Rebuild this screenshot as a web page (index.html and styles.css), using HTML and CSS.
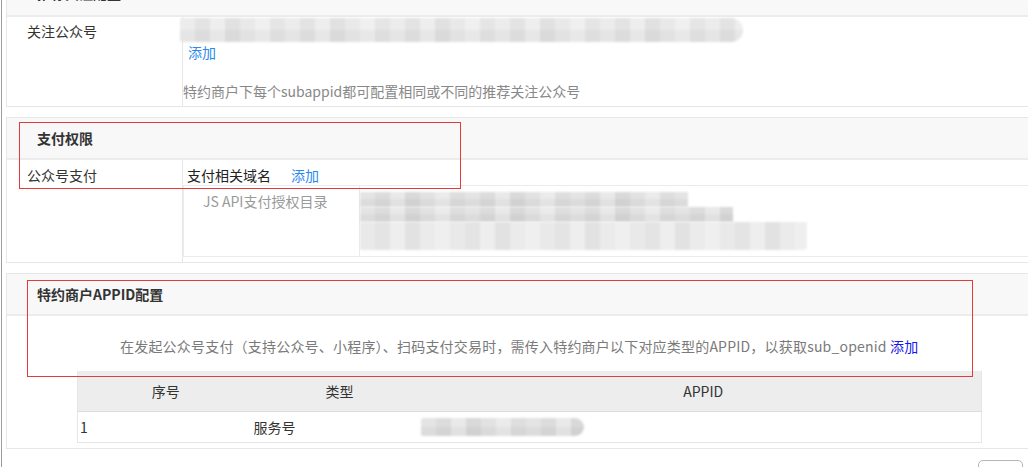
FILE: index.html
```html
<!DOCTYPE html>
<html lang="zh-CN">
<head>
<meta charset="utf-8">
<title>特约商户配置</title>
<link rel="stylesheet" href="styles.css">
</head>
<body>
<div class="page">
  <section class="panel panel-first">
    <div class="panel-head">推荐关注配置</div>
    <div class="panel-row">
      <div class="label label-first">关注公众号</div>
      <div class="value value-first">
        <div class="blur blur-appid"></div>
        <a class="link link-add">添加</a>
        <p class="note">特约商户下每个subappid都可配置相同或不同的推荐关注公众号</p>
      </div>
    </div>
  </section>

  <section class="panel">
    <div class="panel-head">支付权限</div>
    <div class="panel-row">
      <div class="label">公众号支付</div>
      <div class="value value-pay">
        <div class="domain-line">支付相关域名<a class="link link-domain">添加</a></div>
        <div class="dir-box">
          <div class="dir-label">JS API支付授权目录</div>
          <div class="dir-value">
            <div class="blur blur-dir blur-dir-1"></div>
            <div class="blur blur-dir blur-dir-2"></div>
            <div class="blur blur-dir blur-dir-3"></div>
          </div>
        </div>
      </div>
    </div>
  </section>

  <section class="panel">
    <div class="panel-head">特约商户APPID配置</div>
    <div class="panel-body">
      <p class="tip">在发起公众号支付（支持公众号、小程序）、扫码支付交易时，需传入特约商户以下对应类型的APPID，以获取sub_openid <a class="link-strong">添加</a></p>
      <table class="appid-table">
        <colgroup>
          <col class="col-no">
          <col class="col-type">
          <col class="col-appid">
        </colgroup>
        <thead>
          <tr><th>序号</th><th>类型</th><th>APPID</th></tr>
        </thead>
        <tbody>
          <tr>
            <td class="cell-no">1</td>
            <td class="cell-type">服务号</td>
            <td class="cell-appid"><div class="blur blur-row"></div></td>
          </tr>
        </tbody>
      </table>
    </div>
  </section>

  <div class="footer"><button class="btn" type="button">返回</button></div>
</div>

<div class="mark mark-pay"></div>
<div class="mark mark-appid"></div>
</body>
</html>
```

FILE: styles.css
```css
html, body {
  margin: 0;
  padding: 0;
  overflow: hidden;
  background: #ffffff;
}

body {
  font-family: "Noto Sans CJK SC", "Microsoft YaHei", sans-serif;
  font-size: 14px;
  line-height: 20px;
  color: #333333;
  width: 1028px;
  height: 467px;
}

.page {
  display: flow-root;
  margin-left: 1px;
  border-left: 1px solid #9c9c9c;
  padding-left: 4px;
  height: 600px;
  width: 1100px;
}

.panel {
  width: 1045px;
  box-sizing: border-box;
  border: 1px solid #e7e7e7;
  margin-top: 10px;
  background: #ffffff;
}

.panel-first {
  margin-top: -27px;
}

.panel-head {
  height: 40px;
  line-height: 40px;
  padding-left: 30px;
  background: #f8f8f8;
  border-bottom: 2px solid #ececec;
  font-weight: bold;
  color: #333333;
}

.panel-first .panel-head {
  height: 41px;
  line-height: 38px;
}

.panel-row {
  display: flex;
}

.label {
  width: 176px;
  flex: none;
  box-sizing: border-box;
  border-right: 1px solid #e7e7e7;
  padding: 5px 0 0 20px;
  color: #333333;
}

.label-first {
  padding-top: 4px;
}

.value {
  flex: 1;
  min-width: 0;
}

.value-first {
  padding: 1px 0 5px 0;
}

.link {
  color: #2a8af0;
  text-decoration: none;
}

.link-add {
  display: block;
  padding-left: 5px;
}

.note {
  margin: 19px 0 0 0;
  color: #888888;
}

/* blurred (masked) values */
.blur {
  filter: blur(0.8px);
  background:
    linear-gradient(180deg, rgba(255,255,255,0) 0 50%, rgba(0,0,0,0.035) 50% 100%),
    repeating-linear-gradient(90deg,
      #e4e4e4 0 15px, #dcdcdc 15px 30px, #e9e9e9 30px 45px,
      #d9d9d9 45px 60px, #e2e2e2 60px 75px, #ebebeb 75px 90px,
      #dedede 90px 105px);
}

.blur-appid {
  width: 563px;
  height: 24px;
  margin-left: -3px;
  border-radius: 2px 12px 12px 2px;
  background:
    linear-gradient(180deg, rgba(255,255,255,0) 0 50%, rgba(0,0,0,0.03) 50% 100%),
    repeating-linear-gradient(90deg,
      #ececec 0 15px, #e3e3e3 15px 30px, #eeeeee 30px 45px,
      #e1e1e1 45px 60px, #e9e9e9 60px 75px, #f0f0f0 75px 90px,
      #e5e5e5 90px 105px);
}

.domain-line {
  padding: 5px 0 0 4px;
  color: #222222;
}

.link-domain {
  margin-left: 20px;
}

.value-pay {
  padding-bottom: 5px;
}

.dir-box {
  display: flex;
  border: 1px solid #ebebeb;
  border-right: none;
  height: 70px;
}

.dir-label {
  width: 176px;
  flex: none;
  box-sizing: border-box;
  border-right: 1px solid #ebebeb;
  padding: 5px 0 0 19px;
  color: #9a9a9a;
}

.dir-value {
  flex: 1;
  padding-top: 6px;
}

.blur-dir-1 {
  width: 328px;
  height: 15px;
}

.blur-dir-2 {
  width: 373px;
  height: 15px;
}

.blur-dir-3 {
  width: 447px;
  height: 28px;
  border-radius: 0 0 4px 0;
  background:
    repeating-linear-gradient(90deg,
      #e9e9e9 0 15px, #e4e4e4 15px 30px, #eeeeee 30px 45px,
      #e2e2e2 45px 60px, #ebebeb 60px 75px, #efefef 75px 90px);
}

.panel-body {
  padding: 20px 0 5px 0;
}

.tip {
  margin: 0 0 15px 0;
  padding-left: 113px;
  color: #7a7a7a;
  white-space: nowrap;
  letter-spacing: 0.2px;
}

.link-strong {
  color: #1616ee;
  text-decoration: none;
}

.appid-table {
  margin-left: 70px;
  width: 904px;
  table-layout: fixed;
  border-collapse: collapse;
  border: 1px solid #e6e6e6;
  border-top: none;
}

.col-no { width: 176px; }
.col-type { width: 172px; }
.col-appid { width: 556px; }

.appid-table th {
  height: 40px;
  padding: 0;
  background: #ededed;
  border-bottom: 1px solid #dcdcdc;
  font-weight: normal;
  text-align: center;
  color: #333333;
}

.appid-table td {
  height: 30px;
  padding: 0;
  text-align: left;
  vertical-align: middle;
  color: #333333;
}

.cell-no {
  padding-left: 2px !important;
  color: #3a2a5a;
}

.cell-appid {
  overflow: visible;
}

.blur-row {
  width: 163px;
  height: 18px;
  margin-left: -5px;
  border-radius: 2px 9px 9px 2px;
}

.footer {
  display: flex;
  justify-content: flex-end;
  width: 1017px;
  margin-top: 11px;
}

.btn {
  width: 45px;
  height: 28px;
  border: 1px solid #b5b5b5;
  border-radius: 5px;
  background: #ffffff;
  font-family: inherit;
  font-size: 13px;
  color: #333333;
}

/* annotation rectangles drawn over the screenshot */
.mark {
  position: absolute;
  border: 1px solid #e63a3a;
  box-sizing: border-box;
  pointer-events: none;
}

.mark-pay {
  left: 19px;
  top: 122px;
  width: 442px;
  height: 67px;
}

.mark-appid {
  left: 27px;
  top: 280px;
  width: 946px;
  height: 97px;
}
```
